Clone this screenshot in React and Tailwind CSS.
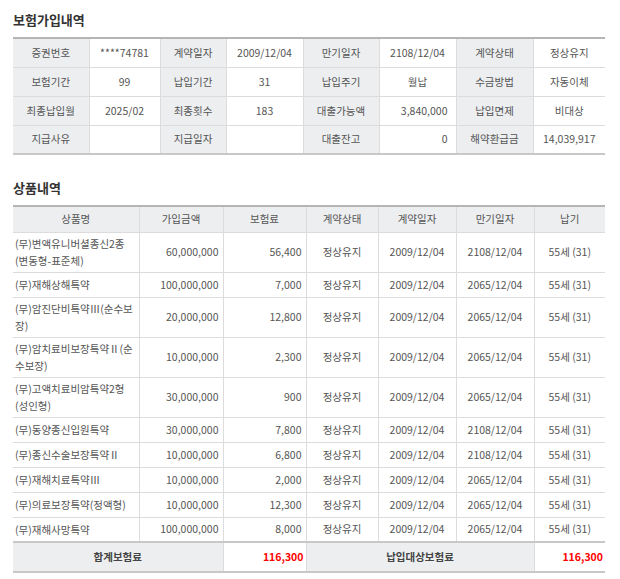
export default function App() {
  const font = { fontFamily: '"Noto Sans CJK KR","Noto Sans",sans-serif' };
  const th = "bg-[#eceef0] text-center border-r border-b border-[#dcdcdc] text-[#555] font-normal";
  const td = "text-center border-r border-b border-[#dcdcdc] text-[#555]";
  const top = [
    [["증권번호","****74781"],["계약일자","2009/12/04"],["만기일자","2108/12/04"],["계약상태","정상유지"]],
    [["보험기간","99"],["납입기간","31"],["납입주기","월납"],["수금방법","자동이체"]],
    [["최종납입월","2025/02"],["최종횟수","183"],["대출가능액","3,840,000",1],["납입면제","비대상"]],
    [["지급사유",""],["지급일자",""],["대출잔고","0",1],["해약환급금","14,039,917"]],
  ];
  const rows = [
    ["(무)변액유니버셜종신2종(변동형-표준체)","60,000,000","56,400","2108/12/04",1],
    ["(무)재해상해특약","100,000,000","7,000","2065/12/04"],
    ["(무)암진단비특약Ⅲ(순수보장)","20,000,000","12,800","2065/12/04",1],
    ["(무)암치료비보장특약Ⅱ(순수보장)","10,000,000","2,300","2065/12/04",1],
    ["(무)고액치료비암특약2형(성인형)","30,000,000","900","2065/12/04",1],
    ["(무)동양종신입원특약","30,000,000","7,800","2108/12/04"],
    ["(무)종신수술보장특약Ⅱ","10,000,000","6,800","2108/12/04"],
    ["(무)재해치료특약Ⅲ","10,000,000","2,000","2065/12/04"],
    ["(무)의료보장특약(정액형)","10,000,000","12,300","2065/12/04"],
    ["(무)재해사망특약","100,000,000","8,000","2065/12/04"],
  ];
  return (
    <div className="w-[620px] h-[579px] bg-white overflow-hidden text-[10.5px]" style={font}>
      <div className="pl-[13px] pt-[10px] text-[13px] font-bold text-[#333] h-[37px]">보험가입내역</div>
      <table className="ml-[13px] w-[592px] border-collapse table-fixed border-t-2 border-t-[#b5b5b5] border-b-2 border-b-[#c8c8c8]">
        <colgroup>
          <col className="w-[76px]" /><col className="w-[71px]" /><col className="w-[66px]" /><col className="w-[77px]" />
          <col className="w-[76px]" /><col className="w-[77px]" /><col className="w-[77px]" /><col className="w-[72px]" />
        </colgroup>
        <tbody>
          {top.map((r, i) => (
            <tr key={i} className="h-[29px]">
              {r.map(([k, v, right], j) => [
                <td key={j + "k"} className={th}>{k}</td>,
                <td key={j + "v"} className={`${td} ${right ? "text-right pr-2" : ""} ${j === 3 ? "border-r-0" : ""} ${v === "14,039,917" ? "text-[#333]" : ""}`}>{v}</td>,
              ])}
            </tr>
          ))}
        </tbody>
      </table>
      <div className="pl-[13px] pt-[23px] text-[13px] font-bold text-[#333] h-[50px]">상품내역</div>
      <table className="ml-[13px] w-[592px] border-collapse table-fixed border-t-2 border-t-[#b5b5b5]">
        <colgroup>
          <col className="w-[126px]" /><col className="w-[84px]" /><col className="w-[83px]" /><col className="w-[72px]" />
          <col className="w-[78px]" /><col className="w-[78px]" /><col className="w-[71px]" />
        </colgroup>
        <thead>
          <tr className="h-[26px]">
            {["상품명","가입금액","보험료","계약상태","계약일자","만기일자","납기"].map((h, i) => (
              <th key={i} className={`${th} ${i === 6 ? "border-r-0" : ""}`}>{h}</th>
            ))}
          </tr>
        </thead>
        <tbody>
          {rows.map((r, i) => (
            <tr key={i} className={r[4] ? "h-[40px]" : "h-[25px]"}>
              <td className={`${td} text-left px-[2px] leading-[17px] break-all`}>{r[0]}</td>
              <td className={`${td} text-right pr-[4px]`}>{r[1]}</td>
              <td className={`${td} text-right pr-[4px]`}>{r[2]}</td>
              <td className={td}>정상유지</td>
              <td className={td}>2009/12/04</td>
              <td className={td}>{r[3]}</td>
              <td className={`${td} border-r-0`}>55세 (31)</td>
            </tr>
          ))}
          <tr className="h-[30px] bg-[#eceef0] font-bold border-t-2 border-t-[#c8c8c8] border-b-2 border-b-[#c8c8c8]">
            <td colSpan={2} className="text-center text-[#444] border-r border-[#dcdcdc]">합계보험료</td>
            <td className="text-right pr-[2px] text-[#ff0000] border-r border-[#dcdcdc] bg-white">116,300</td>
            <td colSpan={3} className="text-center text-[#444] border-r border-[#dcdcdc]">납입대상보험료</td>
            <td className="text-right pr-[2px] text-[#ff0000] bg-white">116,300</td>
          </tr>
        </tbody>
      </table>
    </div>
  );
}
